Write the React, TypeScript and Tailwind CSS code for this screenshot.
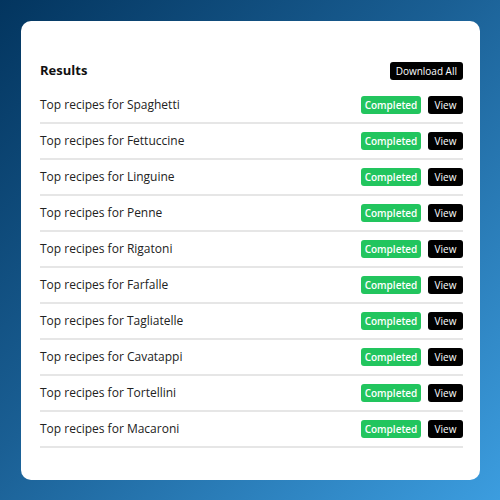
const pastas = [
  "Spaghetti",
  "Fettuccine",
  "Linguine",
  "Penne",
  "Rigatoni",
  "Farfalle",
  "Tagliatelle",
  "Cavatappi",
  "Tortellini",
  "Macaroni",
];

const App = () => {
  return (
    <div className="h-[500px] w-[500px] bg-[linear-gradient(135deg,#03355f_0%,#1a5f94_45%,#3c9ddf_100%)] pl-[21px] pt-[21px] font-['Open_Sans',sans-serif]">
      <div className="h-[459px] w-[459px] rounded-[10px] bg-white pl-[19px] pr-[17px] pt-[41px]">
        {/* Header */}
        <div className="flex h-[18px] items-center justify-between">
          <h2 className="text-[13px] font-bold text-[#111]">Results</h2>
          <button className="h-[18px] rounded-[3px] bg-black px-[6px] text-[10px] font-medium leading-[18px] text-white">
            Download All
          </button>
        </div>

        {/* Rows */}
        <div className="mt-[8px] flex flex-col">
          {pastas.map((p) => (
            <div
              key={p}
              className="flex h-[36px] items-center justify-between border-b-2 border-[#e6e6e6]"
            >
              <span className="text-[12px] text-[#222]">Top recipes for {p}</span>
              <div className="flex items-center gap-[7px]">
                <span className="h-[18px] w-[60px] rounded-[3px] bg-[#22c55e] text-center text-[10px] font-semibold leading-[18px] text-white">
                  Completed
                </span>
                <button className="h-[18px] w-[35px] rounded-[3px] bg-black text-[10px] font-medium leading-[18px] text-white">
                  View
                </button>
              </div>
            </div>
          ))}
        </div>
      </div>
    </div>
  );
};

export default App;
